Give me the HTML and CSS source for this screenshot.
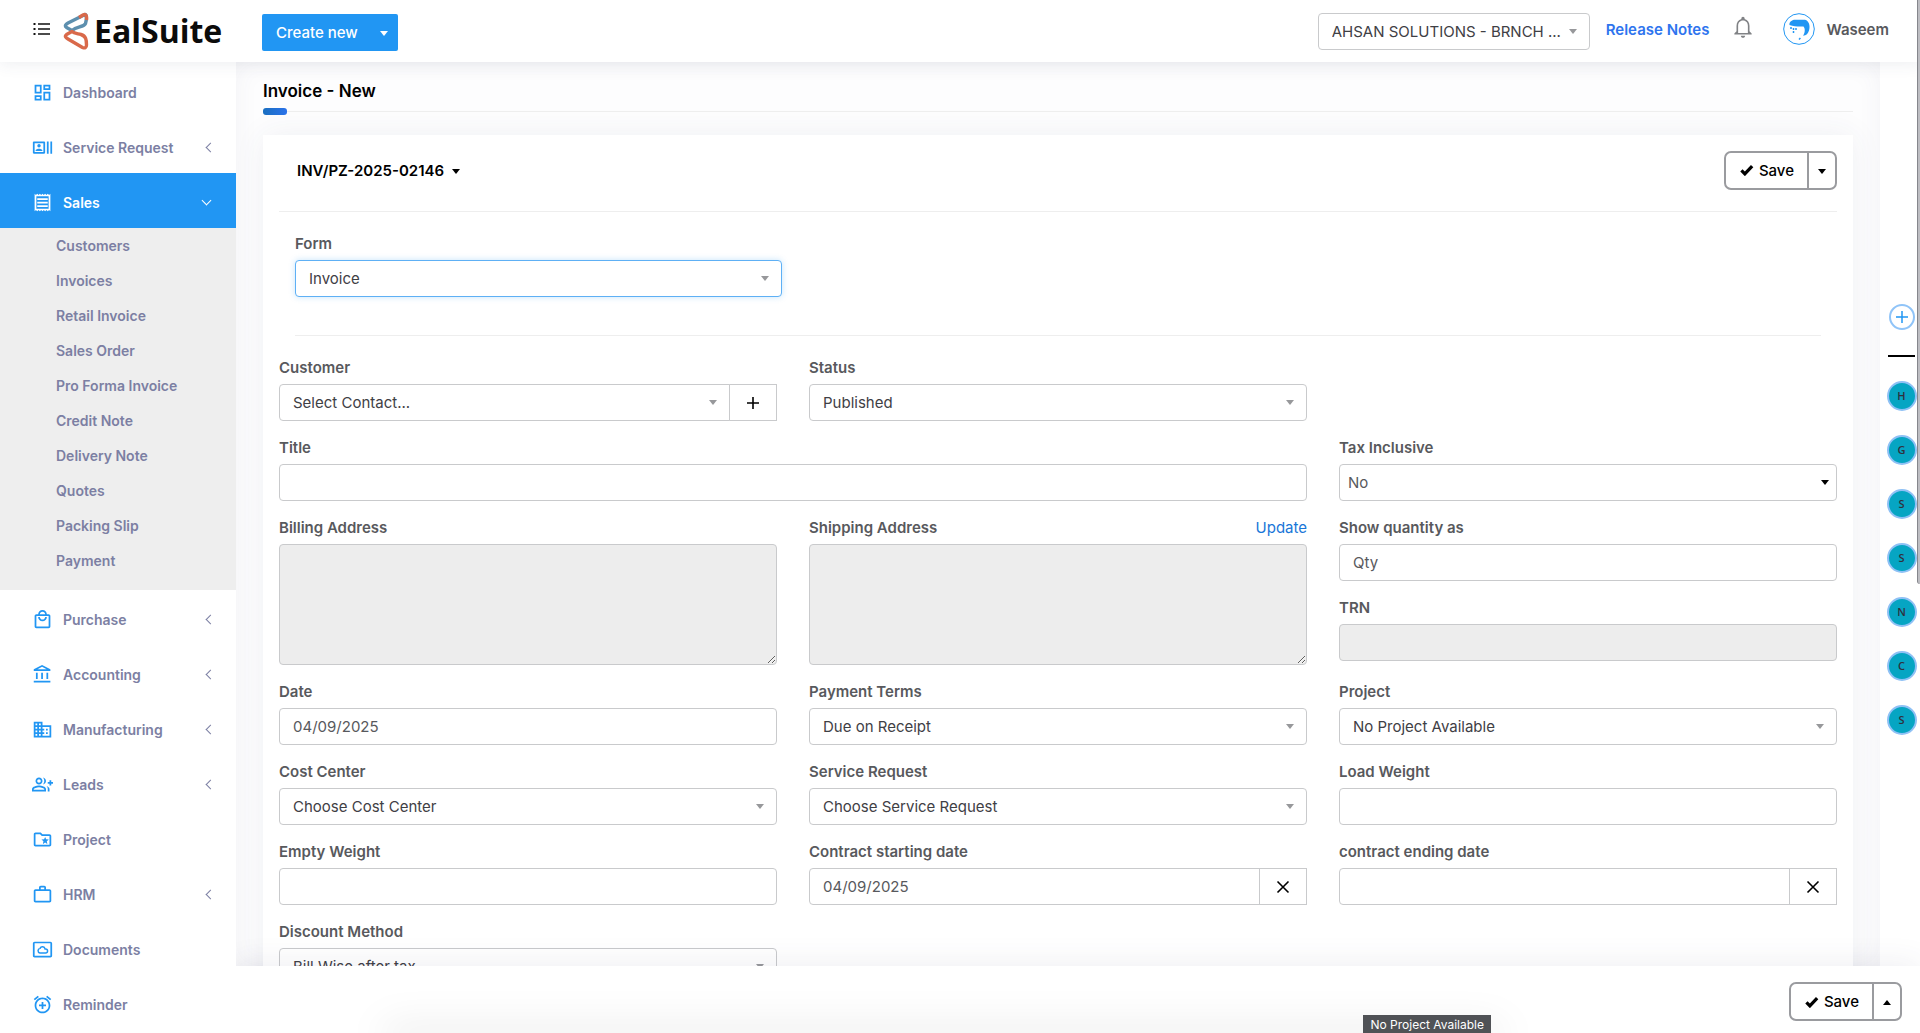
FILE: index.html
```html
<!DOCTYPE html>
<html lang="en">
  <head>
    <meta charset="utf-8" />
    <meta name="viewport" content="width=device-width, initial-scale=1" />
    <title>Invoice - New</title>
    <link rel="stylesheet" href="styles.css" />
  </head>
  <body>
    <header class="topbar">
      <div class="brand">
        <button class="menu_btn" type="button" aria-label="Menu">
          <svg viewBox="0 0 18 14" width="18" height="14">
            <path d="M5 2h12M5 7h12M5 12h12" stroke="#111" stroke-width="1.3" />
            <path d="M.5 2h2M.5 7h2M.5 12h2" stroke="#111" stroke-width="2" />
          </svg>
        </button>
        <a href="#" class="logo">
          <svg viewBox="0 0 26 38" width="26" height="38" fill="none" stroke-width="3.400" stroke-linejoin="round">
            <path d="M22 2.5C24 3 23.5 8 22.5 11.500C21 15 14 14.500 9 18.500L3.500 15.500C1.500 14 2.500 12.500 5 11Z" stroke="#5d8fae" />
            <path d="M16 5.500L20 3C23 1.500 24 4 23.500 8" stroke="#d9694a" />
            <path d="M9 19.500L3.500 22.500C1.500 24 2.500 25.500 5 27L19.500 35.500C22 36.500 23.500 35.500 23.500 33C23.500 28 23 24 18 22.500C14 21.500 11 21.500 9 19.500Z" stroke="#d9694a" />
          </svg>
          <span>EalSuite</span>
        </a>
      </div>
      <div class="create">
        <button type="button" class="create_main">Create new</button>
        <button type="button" class="create_more" aria-label="More"><i class="caret"></i></button>
      </div>
      <div class="top_right">
        <div class="select company">
          <select aria-label="Company">
            <option>AHSAN SOLUTIONS - BRNCH ...</option>
          </select>
        </div>
        <div class="top_links">
          <a href="#" class="release">Release Notes</a>
          <button type="button" class="bell" aria-label="Notifications">
            <svg viewBox="0 0 24 24" width="26" height="26" fill="#808285">
              <path d="M12 22c1.100 0 2-.9 2-2h-4c0 1.100.9 2 2 2zm6-6v-5c0-3.070-1.630-5.640-4.500-6.320V4c0-.83-.67-1.500-1.500-1.500s-1.500.67-1.500 1.500v.68C7.640 5.360 6 7.920 6 11v5l-2 2v1h16v-1l-2-2zm-1.500 1.500h-9V11c0-2.900 1.700-5 4.500-5s4.500 2.100 4.500 5v6.500z" />
            </svg>
          </button>
          <a href="#" class="user">
            <svg viewBox="0 0 32 32" width="32" height="32">
              <circle cx="16" cy="16" r="15.300" fill="#fff" stroke="#2196f3" />
              <path d="M6.500 12C6 9 8.500 7.500 11 6.800H22C26 8 27.500 13 26 17.500C25 20.500 23.500 22.500 20 22.800C22 20 22.500 16 20.500 13.500C16 13.800 11 13.500 6.500 12Z" fill="#2196f3" />
              <path d="M8 14v2M10.500 15v5M13 15v2M16 26.500L17.500 25" stroke="#2196f3" stroke-width="1.500" stroke-dasharray="2 1" />
            </svg>
            <span>Waseem</span>
          </a>
        </div>
      </div>
    </header>

    <div class="layout">
      <nav class="sidebar">
        <ul class="nav">
          <li>
            <a href="#"><svg viewBox="0 0 24 24"><path d="M19 5v2h-4V5h4M9 5v6H5V5h4m10 8v6h-4v-6h4M9 17v2H5v-2h4M21 3h-8v6h8V3zM11 3H3v10h8V3zm10 8h-8v10h8V11zm-10 4H3v6h8v-6z" /></svg>Dashboard</a>
          </li>
          <li>
            <a href="#" class="more"><svg viewBox="0 0 24 24"><path d="M21 5v14h2V5h-2zm-4 14h2V5h-2v14zM14 5H2c-.55 0-1 .45-1 1v12c0 .55.45 1 1 1h12c.55 0 1-.45 1-1V6c0-.55-.45-1-1-1zm-1 12H3V7h10v10z" /><circle cx="8" cy="9.940" r="1.950" /><path d="M11.890 15.350c0-1.300-2.590-1.950-3.890-1.950s-3.890.65-3.890 1.950V16h7.780v-.65z" /></svg>Service Request</a>
          </li>
          <li class="open">
            <a href="#" class="more"><svg viewBox="0 0 24 24"><path d="M19.500 3.500L18 2l-1.500 1.500L15 2l-1.500 1.500L12 2l-1.500 1.500L9 2 7.500 3.500 6 2 4.500 3.500 3 2v20l1.500-1.500L6 22l1.500-1.500L9 22l1.500-1.500L12 22l1.500-1.500L15 22l1.500-1.500L18 22l1.500-1.500L21 22V2l-1.500 1.500zM19 19.090H5V4.910h14v14.180zM6 15h12v2H6zm0-4h12v2H6zm0-4h12v2H6z" /></svg>Sales</a>
            <ul class="subnav">
              <li><a href="#">Customers</a></li>
              <li><a href="#">Invoices</a></li>
              <li><a href="#">Retail Invoice</a></li>
              <li><a href="#">Sales Order</a></li>
              <li><a href="#">Pro Forma Invoice</a></li>
              <li><a href="#">Credit Note</a></li>
              <li><a href="#">Delivery Note</a></li>
              <li><a href="#">Quotes</a></li>
              <li><a href="#">Packing Slip</a></li>
              <li><a href="#">Payment</a></li>
            </ul>
          </li>
          <li>
            <a href="#" class="more"><svg viewBox="0 0 24 24"><path d="M19 6h-2c0-2.760-2.240-5-5-5S7 3.240 7 6H5c-1.100 0-2 .9-2 2v12c0 1.100.9 2 2 2h14c1.100 0 2-.9 2-2V8c0-1.100-.9-2-2-2zm-7-3c1.660 0 3 1.340 3 3H9c0-1.660 1.340-3 3-3zm7 17H5V8h14v12zm-7-8c-1.660 0-3-1.340-3-3H7c0 2.760 2.240 5 5 5s5-2.240 5-5h-2c0 1.660-1.340 3-3 3z" /></svg>Purchase</a>
          </li>
          <li>
            <a href="#" class="more"><svg viewBox="0 0 24 24"><path d="M6.500 10h-2v7h2v-7zm6 0h-2v7h2v-7zm8.500 9H2v2h19v-2zm-2.500-9h-2v7h2v-7zm-7-6.740L16.710 6H6.290l5.210-2.740m0-2.260L2 6v2h19V6l-9.500-5z" /></svg>Accounting</a>
          </li>
          <li>
            <a href="#" class="more"><svg viewBox="0 0 24 24"><path d="M12 7V3H2v18h20V7H12zM6 19H4v-2h2v2zm0-4H4v-2h2v2zm0-4H4V9h2v2zm0-4H4V5h2v2zm4 12H8v-2h2v2zm0-4H8v-2h2v2zm0-4H8V9h2v2zm0-4H8V5h2v2zm10 12h-8v-2h2v-2h-2v-2h2v-2h-2V9h8v10zm-2-8h-2v2h2v-2zm0 4h-2v2h2v-2z" /></svg>Manufacturing</a>
          </li>
          <li>
            <a href="#" class="more"><svg viewBox="0 0 24 24"><path d="M22 9V7h-2v2h-2v2h2v2h2v-2h2V9zM8 12c2.210 0 4-1.790 4-4s-1.790-4-4-4-4 1.790-4 4 1.790 4 4 4zm0-6c1.100 0 2 .9 2 2s-.9 2-2 2-2-.9-2-2 .9-2 2-2zM8 13c-2.670 0-8 1.340-8 4v3h16v-3c0-2.660-5.330-4-8-4zm6 5H2v-.99C2.200 16.290 5.300 15 8 15s5.800 1.290 6 2v1zM12.510 4.050C13.430 5.110 14 6.490 14 8s-.57 2.890-1.490 3.950C14.470 11.700 16 10.040 16 8s-1.530-3.700-3.490-3.950zM16.530 13.830C17.420 14.660 18 15.700 18 17v3h2v-3c0-1.450-1.590-2.510-3.470-3.170z" /></svg>Leads</a>
          </li>
          <li>
            <a href="#"><svg viewBox="0 0 24 24"><path d="M20 6h-8l-2-2H4c-1.100 0-1.990.9-1.990 2L2 18c0 1.100.9 2 2 2h16c1.100 0 2-.9 2-2V8c0-1.100-.9-2-2-2zm0 12H4V6h5.170l2 2H20v10zm-6.920-3.960L12.390 17 15 15.470 17.610 17l-.69-2.960 2.300-1.990-3.030-.26L15 9l-1.190 2.790-3.030.26z" /></svg>Project</a>
          </li>
          <li>
            <a href="#" class="more"><svg viewBox="0 0 24 24"><path d="M14 6V4h-4v2h4zM4 8v11h16V8H4zm16-2c1.110 0 2 .89 2 2v11c0 1.110-.89 2-2 2H4c-1.110 0-2-.89-2-2l.01-11c0-1.110.88-2 1.990-2h4V4c0-1.110.89-2 2-2h4c1.110 0 2 .89 2 2v2h4z" /></svg>HRM</a>
          </li>
          <li>
            <a href="#"><svg viewBox="0 0 24 24"><path d="M21 3H3c-1.100 0-2 .9-2 2v14c0 1.100.9 2 2 2h18c1.100 0 2-.9 2-2V5c0-1.100-.9-2-2-2zm0 16.010H3V4.990h18v14.020z" /><path d="M9 16h6.500a2.300 2.300 0 0 0 0-4.600h-.6a3 3 0 0 0-5.700-.7A2.700 2.700 0 0 0 9 16z" fill="none" stroke="#2196f3" stroke-width="1.700" /></svg>Documents</a>
          </li>
          <li>
            <a href="#"><svg viewBox="0 0 24 24"><path d="M7.880 3.390L6.600 1.860 2 5.710l1.290 1.530 4.590-3.850zM22 5.720l-4.600-3.860-1.290 1.530 4.600 3.860L22 5.720zM12 4c-4.970 0-9 4.030-9 9s4.020 9 9 9c4.970 0 9-4.030 9-9s-4.030-9-9-9zm0 16c-3.870 0-7-3.130-7-7s3.130-7 7-7 7 3.130 7 7-3.130 7-7 7zm1-11h-2v3H8v2h3v3h2v-3h3v-2h-3V9z" /></svg>Reminder</a>
          </li>
        </ul>
      </nav>

      <div class="page">
        <div class="page_body">
          <main class="content">
            <h1>Invoice - New</h1>
            <form class="card" id="invoice_form">
              <div class="card_head">
                <button type="button" class="inv_no">INV/PZ-2025-02146 <i class="caret"></i></button>
                <div class="save_group">
                  <button type="submit" class="save">
                    <svg viewBox="0 0 16 14" width="14" height="12"><path d="M1.500 7.500L5.500 11.500L14 2.500" fill="none" stroke="#000" stroke-width="3.800" /></svg>
                    Save
                  </button>
                  <button type="button" class="save_more" aria-label="Save options"><i class="caret"></i></button>
                </div>
              </div>

              <div class="form_type">
                <div class="field">
                  <label for="form">Form</label>
                  <div class="select focused">
                    <select id="form"><option>Invoice</option></select>
                  </div>
                </div>
              </div>

              <div class="fields">
                <div class="field">
                  <label for="customer">Customer</label>
                  <div class="group">
                    <div class="select">
                      <select id="customer"><option>Select Contact...</option></select>
                    </div>
                    <button type="button" class="addon" aria-label="Add customer">
                      <svg viewBox="0 0 14 14" width="14" height="14"><path d="M7 1v12M1 7h12" stroke="#000" stroke-width="1.600" /></svg>
                    </button>
                  </div>
                </div>
                <div class="field">
                  <label for="status">Status</label>
                  <div class="select">
                    <select id="status"><option>Published</option></select>
                  </div>
                </div>
                <div class="field wide">
                  <label for="title">Title</label>
                  <input type="text" id="title" />
                </div>
                <div class="field">
                  <label for="tax">Tax Inclusive</label>
                  <div class="select plain">
                    <select id="tax"><option>No</option><option>Yes</option></select>
                  </div>
                </div>
                <div class="field">
                  <label for="billing">Billing Address</label>
                  <textarea id="billing" readonly></textarea>
                </div>
                <div class="field">
                  <div class="label_row">
                    <label for="shipping">Shipping Address</label>
                    <a href="#">Update</a>
                  </div>
                  <textarea id="shipping" readonly></textarea>
                </div>
                <div class="stack">
                  <div class="field">
                    <label for="qty">Show quantity as</label>
                    <input type="text" id="qty" value="Qty" />
                  </div>
                  <div class="field">
                    <label for="trn">TRN</label>
                    <input type="text" id="trn" readonly />
                  </div>
                </div>
                <div class="field">
                  <label for="date">Date</label>
                  <input type="text" id="date" value="04/09/2025" />
                </div>
                <div class="field">
                  <label for="terms">Payment Terms</label>
                  <div class="select">
                    <select id="terms"><option>Due on Receipt</option></select>
                  </div>
                </div>
                <div class="field">
                  <label for="project">Project</label>
                  <div class="select">
                    <select id="project"><option>No Project Available</option></select>
                  </div>
                </div>
                <div class="field">
                  <label for="cost">Cost Center</label>
                  <div class="select">
                    <select id="cost"><option>Choose Cost Center</option></select>
                  </div>
                </div>
                <div class="field">
                  <label for="request">Service Request</label>
                  <div class="select">
                    <select id="request"><option>Choose Service Request</option></select>
                  </div>
                </div>
                <div class="field">
                  <label for="load">Load Weight</label>
                  <input type="text" id="load" />
                </div>
                <div class="field">
                  <label for="empty">Empty Weight</label>
                  <input type="text" id="empty" />
                </div>
                <div class="field">
                  <label for="start">Contract starting date</label>
                  <div class="group">
                    <input type="text" id="start" value="04/09/2025" />
                    <button type="button" class="addon" aria-label="Clear">
                      <svg viewBox="0 0 14 14" width="14" height="14"><path d="M1.500 1.500l11 11M12.500 1.500l-11 11" stroke="#000" stroke-width="1.600" /></svg>
                    </button>
                  </div>
                </div>
                <div class="field">
                  <label for="end">contract ending date</label>
                  <div class="group">
                    <input type="text" id="end" />
                    <button type="button" class="addon" aria-label="Clear">
                      <svg viewBox="0 0 14 14" width="14" height="14"><path d="M1.500 1.500l11 11M12.500 1.500l-11 11" stroke="#000" stroke-width="1.600" /></svg>
                    </button>
                  </div>
                </div>
                <div class="field">
                  <label for="discount">Discount Method</label>
                  <div class="select">
                    <select id="discount"><option>Bill Wise after tax</option></select>
                  </div>
                </div>
              </div>
            </form>
          </main>

          <aside class="rail">
            <button type="button" class="rail_add" aria-label="Add">
              <svg viewBox="0 0 12 12" width="12" height="12"><path d="M6 0v12M0 6h12" stroke="#2196f3" stroke-width="1.500" /></svg>
            </button>
            <hr />
            <a href="#">H</a>
            <a href="#">G</a>
            <a href="#">S</a>
            <a href="#">S</a>
            <a href="#">N</a>
            <a href="#">C</a>
            <a href="#">S</a>
          </aside>
        </div>

        <footer class="footer">
          <div class="save_group">
            <button type="submit" form="invoice_form" class="save">
              <svg viewBox="0 0 16 14" width="14" height="12"><path d="M1.500 7.500L5.500 11.500L14 2.500" fill="none" stroke="#000" stroke-width="3.800" /></svg>
              Save
            </button>
            <button type="button" class="save_more" aria-label="Save options"><i class="caret up"></i></button>
          </div>
          <span class="tip">No Project Available</span>
        </footer>
      </div>
    </div>
    <div class="scroll_thumb"></div>
  </body>
</html>
```

FILE: styles.css
```css
* {
  box-sizing: border-box;
  margin: 0;
  padding: 0;
}
body {
  display: flex;
  flex-direction: column;
  height: 100vh;
  overflow: hidden;
  font-family: Inter, "Liberation Sans", sans-serif;
  font-size: 15px;
  color: #58595d;
  background: #fff;
}
button,
input,
select,
textarea {
  font: inherit;
  color: inherit;
}
button {
  border: 0;
  background: none;
  cursor: pointer;
}
a {
  text-decoration: none;
  color: inherit;
}
ul {
  list-style: none;
}

/* small triangle */
.caret {
  display: inline-block;
  border: solid transparent;
  border-width: 5px 4px 0;
  border-top-color: currentColor;
}
.caret.up {
  border-width: 0 4px 5px;
  border-bottom-color: currentColor;
}

/* top bar */
.topbar {
  position: relative;
  z-index: 3;
  display: flex;
  align-items: center;
  flex: none;
  height: 62px;
  padding-right: 31px;
  background: #fff;
  box-shadow: 0 1px 16px rgba(60, 70, 100, 0.1);
}
.brand {
  display: flex;
  align-items: center;
  gap: 12px;
  width: 262px;
  padding-left: 33px;
}
.menu_btn {
  display: flex;
  padding-bottom: 4px;
}
.logo {
  display: flex;
  align-items: center;
  gap: 5px;
  font-family: "Open Sans", sans-serif;
  font-size: 32px;
  font-weight: 700;
  line-height: 40px;
  color: #0b0b0b;
}
.create {
  display: flex;
  height: 37px;
  margin-top: 2px;
  border-radius: 2px;
  background: #2196f3;
  color: #fff;
}
.create_main {
  padding-left: 14px;
  font-weight: 500;
}
.create_more {
  width: 40px;
  padding-left: 12px;
}
.create_more .caret {
  vertical-align: middle;
}
.top_right {
  display: flex;
  align-items: center;
  margin-left: auto;
}
.company {
  width: 272px;
  margin-right: 16px;
}
.top_links {
  display: flex;
  align-items: center;
  padding-bottom: 4px;
}
.release {
  font-weight: 600;
  color: #2e74ee;
  margin-right: 21px;
}
.bell {
  display: flex;
  margin-right: 27px;
  padding-bottom: 4px;
}
.user {
  display: flex;
  align-items: center;
  gap: 11px;
  font-weight: 600;
}

/* left menu */
.layout {
  display: flex;
  flex: 1;
  min-height: 0;
}
.sidebar {
  position: relative;
  z-index: 2;
  flex: none;
  width: 236px;
  padding-top: 1px;
  overflow: hidden;
  background: #fff;
}
.nav a {
  display: flex;
  align-items: center;
  gap: 10px;
  height: 55px;
  padding: 4px 22px 0 32px;
  font-size: 14px;
  font-weight: 600;
  color: #7c7fa3;
}
.nav svg {
  width: 21px;
  height: 21px;
  fill: #2196f3;
}
.nav .more::after {
  content: "";
  width: 6px;
  height: 6px;
  margin-left: auto;
  border: solid #7c7fa3;
  border-width: 0 0 1px 1px;
  transform: rotate(45deg);
}
.nav .open > a {
  background: #2196f3;
  color: #fff;
}
.nav .open > a svg {
  fill: #fff;
}
.nav .open > a::after {
  margin-right: 4px;
  margin-bottom: 4px;
  border-color: #fff;
  transform: rotate(-45deg);
}
.subnav {
  padding-bottom: 12px;
  background: #eee;
}
.nav .subnav a {
  height: 35px;
  padding: 0 0 0 56px;
}

/* page */
.page {
  display: flex;
  flex-direction: column;
  flex: 1;
  min-width: 0;
}
.page_body {
  display: flex;
  flex: 1;
  min-height: 0;
}
.content {
  flex: 1;
  min-width: 0;
  padding: 16px 27px;
  overflow: auto;
  scrollbar-width: none;
  background: #fdfdfe;
  box-shadow: inset 0 0 24px rgba(60, 70, 100, 0.06);
}
h1 {
  position: relative;
  height: 34px;
  margin-bottom: 23px;
  border-bottom: 1px solid #eee;
  font-size: 17px;
  font-weight: 600;
  line-height: 26px;
  color: #000;
}
h1::after {
  content: "";
  position: absolute;
  left: 0;
  bottom: -4px;
  width: 24px;
  height: 7px;
  border-radius: 3px;
  background: linear-gradient(90deg, #1a6fc0, #2a72ea);
}
.card {
  padding: 0 16px 16px;
  background: #fff;
  box-shadow: 0 0 30px rgba(60, 70, 100, 0.07);
}
.card_head {
  display: flex;
  align-items: center;
  justify-content: space-between;
  height: 77px;
  padding-left: 18px;
  padding-bottom: 6px;
  border-bottom: 1px solid #eee;
}
.inv_no {
  font-weight: 600;
  color: #000;
}
.inv_no .caret {
  margin-left: 4px;
  vertical-align: 2px;
}
.save_group {
  display: flex;
  height: 39px;
  border: 2px solid #9a9b9f;
  border-radius: 7px;
  background: #fff;
  color: #000;
}
.save {
  display: flex;
  align-items: center;
  gap: 5px;
  padding: 0 13px 0 14px;
  font-weight: 500;
}
.save_more {
  width: 28px;
  border-left: 2px solid #9a9b9f;
}
.save_more .caret {
  vertical-align: middle;
}

/* form */
.form_type {
  margin: 0 16px 20px;
  padding: 20px 0 38px;
  border-bottom: 1px solid #eee;
}
.form_type .field {
  width: 487px;
}
.fields {
  display: grid;
  grid-template-columns: repeat(3, minmax(0, 1fr));
  column-gap: 32px;
  row-gap: 15px;
}
/* title starts a new row */
.wide {
  grid-column: 1 / span 2;
}
.stack {
  display: flex;
  flex-direction: column;
  gap: 15px;
}
.field label {
  display: block;
  margin-bottom: 4px;
  font-size: 15px;
  font-weight: 600;
  line-height: 24px;
}
.label_row {
  display: flex;
  justify-content: space-between;
}
.label_row a {
  line-height: 24px;
  color: #1976d8;
}
input,
select,
textarea {
  display: block;
  width: 100%;
  height: 37px;
  padding: 0 13px;
  border: 1px solid #c9cacc;
  border-radius: 4px;
  background: #fff;
  outline: 0;
}
textarea {
  height: 121px;
  resize: vertical;
}
input:read-only,
textarea:read-only {
  background: #ededed;
}
.select {
  position: relative;
}
.select select {
  appearance: none;
  color: #3f4045;
}
.select::after {
  content: "";
  position: absolute;
  top: 16px;
  right: 13px;
  border: solid transparent;
  border-width: 5px 4px 0;
  border-top-color: #97989b;
  pointer-events: none;
}
.focused select {
  border-color: #5eb0f5;
  box-shadow: 0 0 6px rgba(33, 150, 243, 0.25);
}
.plain select {
  padding: 0 8px;
  color: #58595d;
}
.plain::after {
  right: 8px;
  border-top-color: #000;
}
.group {
  display: flex;
}
.group .select {
  flex: 1;
}
.group input,
.group select {
  border-radius: 4px 0 0 4px;
}
.addon {
  display: flex;
  align-items: center;
  justify-content: center;
  flex: none;
  width: 48px;
  height: 37px;
  margin-left: -1px;
  border: 1px solid #c9cacc;
  background: #fff;
}

/* right rail */
.rail {
  display: flex;
  flex-direction: column;
  align-items: center;
  gap: 24px;
  flex: none;
  width: 40px;
  padding: 242px 0 0 3px;
  background: #fff;
}
.rail_add {
  display: flex;
  align-items: center;
  justify-content: center;
  width: 26px;
  height: 26px;
  border: 2px solid #90c4f8;
  border-radius: 50%;
}
.rail hr {
  width: 27px;
  margin-top: 1px;
  border: 0;
  border-top: 2px solid #000;
}
.rail a {
  width: 30px;
  height: 30px;
  border: 2px solid #8fc1f5;
  border-radius: 50%;
  background: #06a5c3;
  font: 600 11px/26px "Open Sans", sans-serif;
  text-align: center;
  color: #30303c;
}

/* bottom bar */
.footer {
  position: relative;
  z-index: 1;
  display: flex;
  align-items: center;
  justify-content: flex-end;
  flex: none;
  height: 67px;
  padding: 4px 18px 0 0;
  background: #fff;
  box-shadow: 0 -4px 30px rgba(60, 70, 100, 0.08);
}
.footer::after {
  content: "";
  position: absolute;
  left: 150px;
  right: 420px;
  bottom: -4px;
  height: 4px;
  box-shadow: 0 0 40px 2px rgba(0, 0, 0, 0.22);
}
.tip {
  position: absolute;
  z-index: 1;
  right: 429px;
  bottom: 0;
  padding: 1px 7px 0;
  background: #505256;
  font-size: 12px;
  line-height: 17px;
  color: #fff;
}
.scroll_thumb {
  position: fixed;
  z-index: 4;
  top: 0;
  right: 0;
  width: 3px;
  height: 584px;
  border-left: 1px solid #85868c;
  border-radius: 0 0 0 3px;
  background: #bdbdc2;
}
```
